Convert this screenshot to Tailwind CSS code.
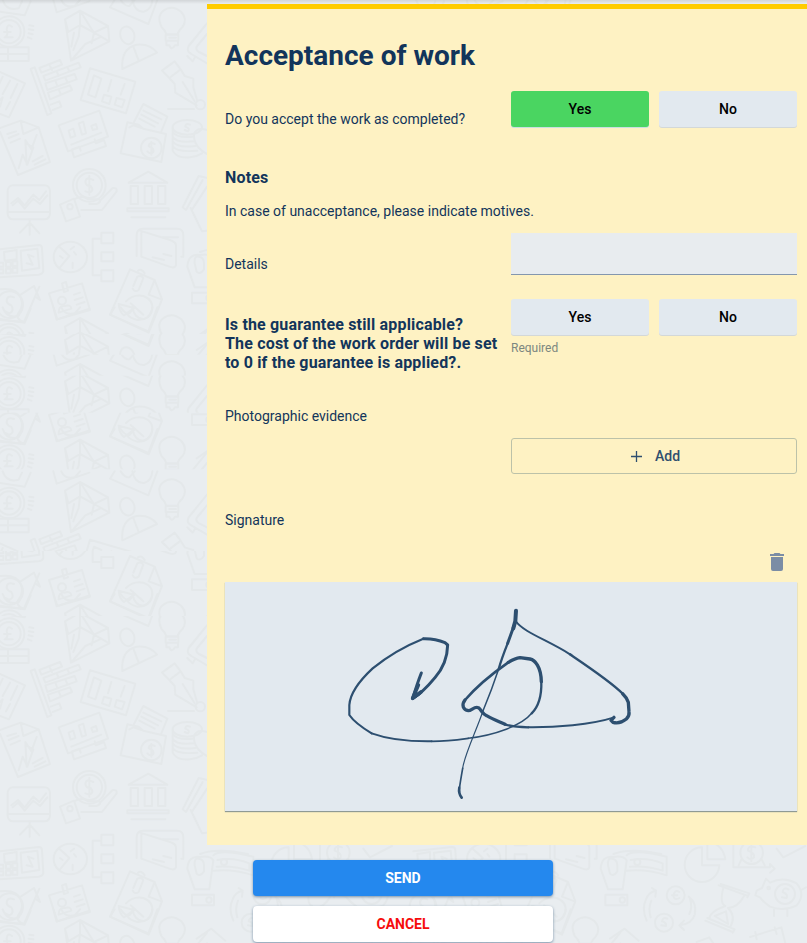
<!DOCTYPE html>
<html lang="en">
<head>
<meta charset="utf-8">
<title>Acceptance of work</title>
<script src="https://cdn.jsdelivr.net/npm/@tailwindcss/browser@4"></script>
</head>
<body class="relative h-[943px] w-[807px] overflow-hidden bg-[#e9edf0] font-[Roboto,sans-serif] text-sm text-[#12355b]">

<!-- Decorative finance doodles -->
<svg class="absolute inset-0 h-[943px] w-[807px]" viewBox="0 0 2421 2829" fill="none" stroke="#e4e8ea" stroke-width="6" stroke-linejoin="round" stroke-linecap="round" aria-hidden="true">
  <defs>
    <g id="tile">
      <path d="M0 35L74 46L92 4M8 0Q20 35 56 25L66 4M160 0L170 37L268 4M184 0Q195 25 224 18L240 0M344 0L330 22L445 72L472 0M362 0Q375 20 388 18L404 0M397 0Q405 37 432 35Q455 28 457 0"/>
      <circle cx="27" cy="95" r="46"/><circle cx="27" cy="95" r="35"/>
      <path d="M36 80Q22 68 20 88Q26 108 14 112L38 112M12 96H32M0 142H86V183H0M0 162H86M24 142V183M88 76L100 78M86 88L100 90M86 100L98 103M84 112L94 116"/>
      <path d="M240 32L195 58L213 182L328 124L324 78ZM195 58L205 96L240 75L282 98L324 78M240 32V75L205 96M240 32L282 98L328 124M282 98L275 130M240 75L236 110L220 150M213 182L256 132L300 112M222 98L214 140"/>
      <ellipse cx="382" cy="106" rx="21" ry="27" transform="rotate(-20 382 106)"/>
      <path d="M367 207Q362 145 410 134Q450 130 471 158ZM400 140L416 182"/>
      <path d="M499 103Q496 91 484 80Q470 48 488 34Q515 12 544 36Q564 58 547 82Q535 92 533 103ZM497 104H535V122H497ZM499 123V136H508Q515 154 525 136H534V123M508 113H528"/>
      <path d="M621 70L566 138Q558 154 574 162L621 190M621 102L590 140Q586 150 597 156L621 168M562 168L578 184L586 170"/>
      <path d="M0 216L75 250L27 352L0 342M8 230L-6 260M30 242L8 282M52 252L32 294M0 300L8 292L0 320M30 306L18 328"/>
      <path d="M92 207L104 202L154 340L142 345ZM118 204L180 180L186 194L124 218ZM130 228L236 188L242 202L136 242ZM136 250L224 222L230 238L142 270ZM144 278L210 256L216 270L150 298ZM152 314L178 304L184 320L158 330M150 198L156 210M170 214L176 228M202 202L208 214M166 242L172 258M196 232L202 246M176 268L182 282"/>
      <path d="M270 205L406 245L378 340L242 300ZM282 226L304 236L286 292L264 284ZM334 240L324 274M374 252L362 284M312 284L334 290L328 312L306 304ZM350 294L374 300L366 322L344 314Z"/>
      <path d="M524 184L542 208L508 234L486 212ZM508 234L524 252L526 278L590 316M542 208L554 228L580 236V262L592 304M548 246L584 304M504 327H582"/><circle cx="601" cy="314" r="14"/>
      <path d="M0 384L62 362L116 382L150 486L54 525L0 396M62 362L70 402L116 382M22 402L48 394M26 414L56 402M32 428L60 416M56 505L68 464L82 494L100 442L78 430M80 494L76 420L94 448L110 405M98 484L128 468M104 494L136 478"/>
      <path d="M176 376L298 332L324 410L204 454ZM206 392L220 386L226 408L212 413ZM236 370L250 365L258 400L246 404ZM274 378L288 372L292 386L278 390ZM214 434L304 398M216 450L222 472L318 438L312 420L288 430L284 418M216 448L238 440L242 452"/>
      <path d="M382 367L416 374L430 386L498 402L484 486L362 460ZM402 366L430 312L502 350L484 394M430 332L484 358M424 344L474 370M418 356L464 380M388 382L400 376L424 384"/><circle cx="454" cy="444" r="31"/>
      <path d="M464 432Q448 424 446 438Q464 446 460 456Q452 464 442 454M454 426V464"/>
      <ellipse cx="562" cy="382" rx="44" ry="22"/><path d="M518 385V395Q530 415 578 410M518 398V410Q530 430 582 424M518 412V424Q530 445 586 438M518 426V438Q530 458 592 452M518 440V452Q530 476 570 472Q590 470 606 460M570 374Q556 368 556 380Q572 386 564 394L554 390M621 390Q590 380 582 402Q580 440 621 462"/>
      <rect x="23" y="556" width="127" height="102" rx="16"/><path d="M23 636H150M34 610L54 594L74 616L100 584L118 600L138 574M38 616L54 602L74 626L100 596L120 612L142 586M89 658V704M89 668L60 698M89 668L118 700"/>
      <circle cx="268" cy="556" r="49"/><circle cx="268" cy="556" r="38"/>
      <path d="M280 540Q258 528 256 546Q258 558 272 558Q284 572 268 578L256 574M268 528V584M180 614L222 596L240 650L198 664ZM222 598Q248 584 264 598H298Q306 606 290 612H268M298 604L338 564Q352 562 350 574L306 630H244"/><circle cx="210" cy="620" r="8"/>
      <path d="M386 548L445 515L502 548ZM392 558H414V612H392ZM434 558H456V612H434ZM474 558H496V612H474ZM382 625H506V634H382ZM394 652H496"/>
      <path d="M596 528L548 622L558 630L608 540M596 528L640 538M572 624L606 694L640 690M578 626L621 560"/>
      <path d="M278 716V826H304M278 716H304M304 698H340V730H304ZM304 757H340V784H304ZM304 811H340V844H304Z"/>
      <path d="M410 768V706Q410 686 428 686H532Q550 686 550 706V770H544M420 692L510 720Q530 726 528 740V796Q524 806 508 800L424 770V698M490 712H534M458 772L492 780M490 762L514 768"/>
      <path d="M0 748L116 735Q126 735 126 745L130 814Q128 822 116 824L0 832M12 756L50 750V778L14 782ZM62 752L112 746L118 804L66 812ZM0 788H10V800H0M18 786H32V800H18ZM38 784H52V798H38ZM0 808H10V820H0M18 806H32V820H18ZM38 804H52V818H38ZM80 790L98 794L84 764L100 770"/>
      <ellipse cx="211" cy="771" rx="50" ry="46"/><path d="M178 740L208 768L180 802M208 768L192 752M222 740L212 748M218 804V788M180 768L188 774M228 764L222 756"/>
      <path d="M0 868Q50 862 62 892Q72 920 56 938Q44 956 72 966L118 860M0 960L72 966M62 884L102 858L120 900L106 890"/><circle cx="29" cy="914" r="40"/><path d="M42 892Q20 884 20 904Q24 914 34 916Q44 934 28 940L16 934"/>
      <path d="M147 880L246 850L270 930L172 958ZM186 850L198 846L204 872L192 876ZM222 884L240 878M224 900L248 892M230 914L254 906M176 938Q176 916 194 918Q212 912 214 926Z"/><circle cx="186" cy="902" r="12"/>
      <path d="M390 808L464 840L486 898L446 998L330 944ZM464 840L446 884L484 898M414 812Q424 804 434 820M400 858L412 830Q424 824 430 834L416 870Q404 878 398 866"/>
      <path d="M378 904Q400 882 430 888Q462 900 456 930Q446 962 412 960Q388 954 382 942M356 912L402 924L372 946Q358 936 356 912M392 910L430 944"/>
      <path d="M562 800Q565 760 600 765Q630 760 640 775L628 862H584ZM576 878H642V910H576ZM584 790Q582 766 596 770Q612 772 612 790V808Q600 825 590 815ZM640 760Q660 740 760 764V820Q700 800 640 806M600 756Q650 736 744 756M652 774Q700 764 748 784V806Q700 790 650 794"/><circle cx="672" cy="780" r="9"/><circle cx="627" cy="894" r="8"/>
      <!-- Right part of the tile -->
      <path d="M866 736A52 52 0 1 0 918 790H866ZM882 716V772H936Q930 728 882 716M960 716V796H1070V786L1084 800L1070 812M976 790L984 772M1046 774L1054 790M1090 740L1110 766L1176 732"/>
      <circle cx="1015" cy="752" r="34"/><path d="M1026 736Q1004 728 1004 746Q1026 754 1022 766Q1012 776 1002 766M1014 726V778"/>
      <path d="M700 956Q684 920 698 892Q706 870 728 866L716 858M728 866L726 884M712 946Q704 920 714 896M826 884Q852 904 844 938Q836 966 798 970L812 956M798 970L812 984M830 890Q838 916 828 936"/>
      <circle cx="787" cy="880" r="27"/><circle cx="752" cy="962" r="27"/><path d="M798 870Q784 860 780 882Q784 896 798 888M776 880H792M762 950Q748 944 746 958Q760 962 758 972L744 970"/>
      <path d="M916 850L1004 882M922 846L1008 874L1002 886M876 956L958 990M882 948L964 982L958 992M930 858Q918 904 936 912Q890 928 888 950M992 882Q974 916 944 918Q970 944 950 976M904 942L938 928L944 966Z"/>
      <path d="M1058 830L1070 842Q1110 822 1150 844Q1178 878 1150 910Q1110 930 1070 914Q1050 900 1040 886L1026 880L1030 866L1046 858ZM1082 922V942M1122 922V942M1164 864L1178 856"/><circle cx="1115" cy="876" r="30"/><path d="M1126 862Q1110 854 1108 870Q1126 878 1120 888L1106 886"/><circle cx="1066" cy="858" r="4"/>
      <path d="M590 1010L634 980L676 1016M850 1020L888 1006L900 1024M1010 1005L1104 976L1116 1024M1026 990L1030 1012M1084 976L1090 996"/>
    </g>
    <g id="row"><use href="#tile"/><use href="#tile" x="1240"/><use href="#tile" x="-1240"/></g>
    <g id="doodles"><use href="#row"/><use href="#row" y="922"/></g>
    <clipPath id="s1"><path d="M0 0H2421V1002H0z"/></clipPath>
    <clipPath id="s2"><path d="M0 1002H2421V1064H0z"/></clipPath>
    <clipPath id="s3"><path d="M0 1064H2421V1127H0z"/></clipPath>
    <clipPath id="s4"><path d="M0 1127H2421V1238H0z"/></clipPath>
    <clipPath id="s5"><path d="M0 1238H2421V1408H0z"/></clipPath>
    <clipPath id="s6"><path d="M0 1408H2421V1653H0z"/></clipPath>
    <clipPath id="s7"><path d="M0 1653H2421V1848H0z"/></clipPath>
    <clipPath id="s8"><path d="M0 1848H2421V2829H0z"/></clipPath>
  </defs>
  <g clip-path="url(#s1)"><use href="#doodles"/></g>
  <g clip-path="url(#s2)"><use href="#doodles" y="40"/></g>
  <g clip-path="url(#s3)"><use href="#doodles" y="1060"/></g>
  <g clip-path="url(#s4)"><use href="#doodles" y="1086"/></g>
  <g clip-path="url(#s5)"><use href="#doodles" y="365"/></g>
  <g clip-path="url(#s6)"><use href="#doodles" y="1414"/></g>
  <g clip-path="url(#s7)"><use href="#doodles" y="860"/></g>
  <g clip-path="url(#s8)"><use href="#doodles" y="1806"/></g>
</svg>

<div class="relative flex h-full flex-col">
  <div class="h-1 shrink-0 bg-linear-to-b from-black/10 to-transparent"></div>

  <main class="ml-[207px] flex h-[841px] shrink-0 flex-col border-t-[5px] border-[#ffcc00] bg-[#fef2c3] pr-2.5 pl-[18px]">
    <h1 class="mt-[30px] text-[28px] leading-[34px] font-bold">Acceptance of work</h1>

    <section class="mt-[18px] grid grid-cols-2">
      <p class="mt-[18px] leading-5">Do you accept the work as completed?</p>
      <div class="grid h-9 grid-cols-2 gap-2.5 font-medium text-black">
        <button class="rounded-[3px] bg-[#4ad561] shadow-[0_1px_0_#c9dfe0]">Yes</button>
        <button class="rounded-[3px] bg-[#e2e9ef] shadow-[0_1px_0_#d3d8d8]">No</button>
      </div>
    </section>

    <h2 class="mt-[39px] text-base leading-5 font-bold tracking-[0.17px]">Notes</h2>
    <p class="mt-[13px] leading-5">In case of unacceptance, please indicate motives.</p>

    <section class="mt-3 grid h-[42px] grid-cols-2">
      <label for="details" class="mt-[21px] leading-5">Details</label>
      <input id="details" class="h-[42px] border-b border-[#8497ae] bg-[#e8ecef]">
    </section>

    <section class="mt-6 grid h-[107px] grid-cols-2">
      <p class="mt-4 text-base leading-[19px] font-bold tracking-[0.17px] whitespace-nowrap">Is the guarantee still applicable?<br>The cost of the work order will be set<br>to 0 if the guarantee is applied?.</p>
      <div>
        <div class="grid h-9 grid-cols-2 gap-2.5 font-medium text-black">
          <button class="rounded-[3px] bg-[#e2e9ef] shadow-[0_1px_0_#d3d8d8]">Yes</button>
          <button class="rounded-[3px] bg-[#e2e9ef] shadow-[0_1px_0_#d3d8d8]">No</button>
        </div>
        <p class="mt-[5px] text-xs leading-4 text-[#7c8780]">Required</p>
      </div>
    </section>

    <p class="leading-5">Photographic evidence</p>
    <button class="mt-3 flex h-9 w-[286px] shrink-0 items-center justify-center gap-[13px] self-end rounded-[3px] border border-[#bcc2a9] pl-[3px] font-medium text-[#2f4f6f]">
      <svg class="size-[11px]" viewBox="0 0 11 11" stroke="currentColor" stroke-width="1.3"><path d="M5.5 0V11M0 5.5H11"/></svg>
      Add
    </button>

    <p class="mt-9 leading-5">Signature</p>
    <button class="mt-[23px] mr-[13px] h-[18px] w-3.5 shrink-0 self-end text-[#7b8da5]" aria-label="Delete">
      <svg class="h-[18px] w-3.5" viewBox="0 0 14 18" fill="currentColor"><path d="M1 16q0 2 2 2h8q2 0 2-2V4H1zM14 1h-3.5l-1-1h-5l-1 1H0v2h14z"/></svg>
    </button>

    <div class="mt-[11px] h-[229px] w-[572px] shrink-0 bg-[#e2e9ef] shadow-[0_1px_1px_#8f9a94]">
      <svg class="h-[229px] w-[572px]" viewBox="-330 -39 1716 687" fill="none" stroke="#2d4f70" stroke-linecap="round" stroke-linejoin="round">
        <path stroke-width="9" d="M259 234Q248 262 233 310L252 297"/>
        <path stroke-width="11" d="M250 270L233 310L258 291"/>
        <path stroke-width="9" d="M233 310Q262 294 300 248Q337 205 338 150L330 143Q300 130 265 131"/>
        <path stroke-width="6.5" d="M265 131C205 155 150 190 113 220C70 260 45 300 43 330V360C60 385 90 403 110 415"/>
        <path stroke-width="6" d="M110 415C160 433 220 440 290 439"/>
        <path stroke-width="5" d="M290 439C340 439 365 435 400 430"/>
        <path stroke-width="4.5" d="M400 430C480 420 560 392 590 355"/>
        <path stroke-width="7" d="M590 355C610 335 620 300 619 260"/>
        <path stroke-width="10" d="M619 260C618 215 600 195 585 192L555 188Q540 190 520 202"/>
        <path stroke-width="8" d="M520 202C480 230 430 268 390 315"/>
        <path stroke-width="10" d="M390 315C378 330 385 345 400 347C410 347 418 333 430 338C440 345 440 355 455 362C475 374 490 379 510 388"/>
        <path stroke-width="7" d="M510 388C530 395 550 396 580 397"/>
        <path stroke-width="6" d="M580 397C660 398 770 389 835 368"/>
        <path stroke-width="10" d="M837 367L828 376L834 382Q854 388 874 372Q884 362 882 350L880 322Q874 306 863 296"/>
        <path stroke-width="7" d="M863 296C830 262 770 222 705 178"/>
        <path stroke-width="6" d="M705 178C640 136 565 112 542 78"/>
        <path stroke-width="12" d="M543 47L541 78L535 100"/>
        <path stroke-width="9" d="M537 92L518 145"/>
        <path stroke-width="7" d="M518 145Q500 190 491 222"/>
        <path stroke-width="4.5" d="M491 222Q470 285 445 345"/>
        <path stroke-width="3.5" d="M445 345C425 405 388 480 383 520"/>
        <path stroke-width="5" d="M383 520Q376 560 374 575"/>
        <path stroke-width="8" d="M373 578Q370 595 380 608"/>
      </svg>
    </div>
  </main>

  <div class="mt-[15px] ml-[253px] flex w-[300px] flex-col gap-2.5 font-bold">
    <button class="h-9 rounded-[4px] bg-[#2488ee] text-white shadow-[0_1px_3px_#7890a8]">SEND</button>
    <button class="h-9 rounded-[4px] bg-white text-[#f60c0c] shadow-[0_1px_3px_#7890a8]">CANCEL</button>
  </div>
</div>
</body>
</html>
